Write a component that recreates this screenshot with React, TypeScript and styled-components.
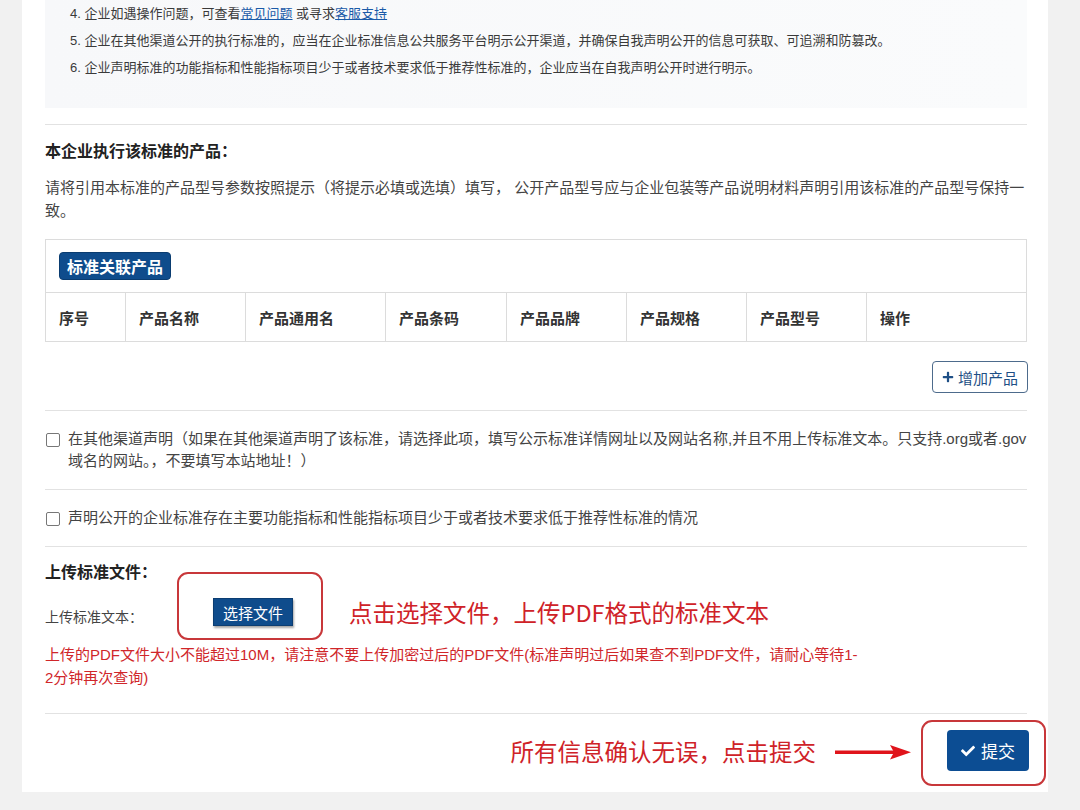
import * as React from "react";
import styled, {createGlobalStyle} from "styled-components";
import {FaCheck, FaPlus} from "react-icons/fa";

const GlobalStyle = createGlobalStyle`
    html, body {
        margin: 0;
        padding: 0;
        background: #f1f1f1;
    }

    body {
        font-family: "Liberation Sans", "Noto Sans CJK SC", sans-serif;
        color: #333;
    }
`;

const Page = styled.div`
    height: 810px;
    overflow: hidden;
    padding: 0 32px 0 22px;
`;

const Panel = styled.div`
    background: #fff;
    padding: 0 21px 21px 23px;
`;

const Notice = styled.ol`
    list-style: none;
    margin: 0;
    padding: 0 20px 27px 25px;
    background: linear-gradient(90deg, #f7f8fa, #fafbfc);

    li {
        font-size: 13px;
        line-height: 27px;
        color: #3a3a3a;
    }

    a {
        color: #1a5aa8;
        text-decoration: underline;
    }
`;

const Rule = styled.hr`
    border: none;
    border-top: 1px solid #e2e2e2;
    margin: ${p => p.$top ?? 0}px 0 0;
`;

const SectionTitle = styled.h3`
    margin: ${p => p.$top}px 0 0;
    font-size: 16px;
    line-height: 24px;
    font-weight: bold;
    color: #222;
`;

const Hint = styled.p`
    margin: 12px 0 0;
    font-size: 15px;
    line-height: 23px;
    color: #444;
`;

const TableBox = styled.div`
    margin-top: 17px;
    border: 1px solid #dcdcdc;
`;

const BadgeBar = styled.div`
    height: 52px;
    display: flex;
    align-items: center;
    padding-left: 13px;
    border-bottom: 1px solid #dcdcdc;
`;

const Badge = styled.span`
    display: inline-flex;
    align-items: center;
    height: 26px;
    padding: 0 7px;
    border-radius: 4px;
    background: #0f4c8c;
    border: 1px solid #0a3c70;
    color: #fff;
    font-size: 16px;
    font-weight: bold;
`;

const HeadRow = styled.div`
    display: grid;
    grid-template-columns: 79px 120px 140px 121px 120px 120px 120px 1fr;
    height: 48px;
`;

const HeadCell = styled.div`
    display: flex;
    align-items: center;
    padding-left: 13px;
    font-size: 15px;
    font-weight: bold;
    color: #333;
    border-left: ${p => (p.$first ? "none" : "1px solid #dcdcdc")};
`;

const Actions = styled.div`
    display: flex;
    justify-content: flex-end;
    margin: 19px -1px 0 0;
`;

const OutlineButton = styled.button`
    display: inline-flex;
    align-items: center;
    gap: 4px;
    height: 32px;
    padding: 0 9px;
    border: 1px solid #4d6b8c;
    border-radius: 4px;
    background: #fff;
    color: #1e4f86;
    font-family: inherit;
    font-size: 15px;

    svg {
        font-size: 12px;
    }
`;

const CheckRow = styled.label`
    display: flex;
    align-items: flex-start;
    gap: 8px;
    padding: 17px 0 17px 1px;
    font-size: 15px;
    line-height: 22px;
    color: #444;
`;

const Box = styled.span`
    flex: none;
    width: 12px;
    height: 12px;
    margin-top: 5px;
    border: 1px solid #777;
    border-radius: 2px;
    background: #fff;
`;

const UploadRow = styled.div`
    display: flex;
    align-items: center;
    margin-top: 7px;
    height: 40px;
`;

const FieldLabel = styled.span`
    width: 168px;
    flex: none;
    font-size: 14px;
    color: #444;
    padding-top: 8px;
`;

const FileButtonWrap = styled.span`
    position: relative;
    display: inline-flex;

    &::before {
        content: "";
        position: absolute;
        inset: -26px -30px -14px -36px;
        border: 2px solid #c8373a;
        border-radius: 11px;
    }
`;

const FileButton = styled.button`
    height: 28px;
    padding: 0 9px;
    border: 1px solid #0b3d72;
    background: #0f4c8c;
    color: #fff;
    font-family: inherit;
    font-size: 15px;
    box-shadow: 1px 2px 2px rgba(0, 0, 0, 0.35);
`;

const Callout = styled.span`
    font-family: "Noto Sans CJK SC", sans-serif;
    font-size: 23.5px;
    color: #cf2228;
    margin-left: ${p => p.$left ?? 0}px;
    white-space: nowrap;
`;

const Warning = styled.p`
    margin: 11px 0 0;
    max-width: 830px;
    font-size: 15px;
    line-height: 23px;
    color: #d0262a;
`;

const SubmitRow = styled.div`
    display: flex;
    justify-content: flex-end;
    align-items: center;
    padding-top: 16px;
    margin-right: -2px;
`;

const Arrow = styled.svg`
    margin: 2px 0 0 19px;
`;

const SubmitWrap = styled.span`
    position: relative;
    display: inline-flex;
    margin-left: 36px;

    &::before {
        content: "";
        position: absolute;
        inset: -10px -17px -15px -26px;
        border: 2px solid #c8373a;
        border-radius: 11px;
    }
`;

const SubmitButton = styled.button`
    display: inline-flex;
    align-items: center;
    gap: 6px;
    height: 41px;
    padding: 0 14px;
    border: none;
    border-radius: 4px;
    background: #0c4d93;
    color: #fff;
    font-family: inherit;
    font-size: 17px;

    svg {
        font-size: 14px;
    }
`;

const columns = ["序号", "产品名称", "产品通用名", "产品条码", "产品品牌", "产品规格", "产品型号", "操作"];

export default function App() {
    return <Page>
        <GlobalStyle/>
        <Panel>
            <Notice>
                <li>4. 企业如遇操作问题，可查看<a href="#">常见问题</a> 或寻求<a href="#">客服支持</a></li>
                <li>5. 企业在其他渠道公开的执行标准的，应当在企业标准信息公共服务平台明示公开渠道，并确保自我声明公开的信息可获取、可追溯和防篡改。</li>
                <li>6. 企业声明标准的功能指标和性能指标项目少于或者技术要求低于推荐性标准的，企业应当在自我声明公开时进行明示。</li>
            </Notice>
            <Rule $top={16}/>

            <SectionTitle $top={15}>本企业执行该标准的产品：</SectionTitle>
            <Hint>请将引用本标准的产品型号参数按照提示（将提示必填或选填）填写， 公开产品型号应与企业包装等产品说明材料声明引用该标准的产品型号保持一致。</Hint>

            <TableBox>
                <BadgeBar><Badge>标准关联产品</Badge></BadgeBar>
                <HeadRow>
                    {columns.map((c, i) => <HeadCell key={c} $first={i === 0}>{c}</HeadCell>)}
                </HeadRow>
            </TableBox>

            <Actions>
                <OutlineButton><FaPlus/>增加产品</OutlineButton>
            </Actions>
            <Rule $top={17}/>

            <CheckRow>
                <Box/>
                <span>在其他渠道声明（如果在其他渠道声明了该标准，请选择此项，填写公示标准详情网址以及网站名称,并且不用上传标准文本。只支持.org或者.gov域名的网站。，不要填写本站地址！）</span>
            </CheckRow>
            <Rule/>
            <CheckRow>
                <Box/>
                <span>声明公开的企业标准存在主要功能指标和性能指标项目少于或者技术要求低于推荐性标准的情况</span>
            </CheckRow>
            <Rule/>

            <SectionTitle $top={14}>上传标准文件：</SectionTitle>
            <UploadRow>
                <FieldLabel>上传标准文本：</FieldLabel>
                <FileButtonWrap><FileButton>选择文件</FileButton></FileButtonWrap>
                <Callout $left={56}>点击选择文件，上传PDF格式的标准文本</Callout>
            </UploadRow>
            <Warning>上传的PDF文件大小不能超过10M，请注意不要上传加密过后的PDF文件(标准声明过后如果查不到PDF文件，请耐心等待1-<br/>2分钟再次查询)</Warning>
            <Rule $top={24}/>

            <SubmitRow>
                <Callout>所有信息确认无误，点击提交</Callout>
                <Arrow width="76" height="18" viewBox="0 0 76 18">
                    <path d="M0 7.5 H60 V11 H0 Z" fill="#e0141b"/>
                    <path d="M55 2 L76 9.25 L55 16.5 L59 9.25 Z" fill="#e0141b"/>
                </Arrow>
                <SubmitWrap>
                    <SubmitButton><FaCheck/>提交</SubmitButton>
                </SubmitWrap>
            </SubmitRow>
        </Panel>
    </Page>;
}
